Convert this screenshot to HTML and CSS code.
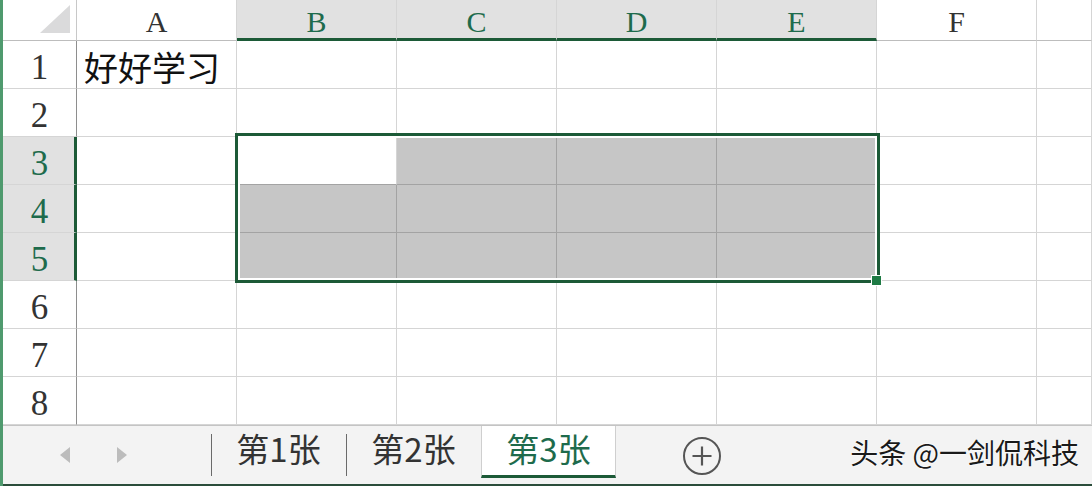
FILE: index.html
```html
<!DOCTYPE html>
<html lang="zh-CN">
<head>
<meta charset="utf-8">
<title>Sheet</title>
<link rel="stylesheet" href="styles.css">
</head>
<body>
<div class="app">
  <div class="sheet">
    <div class="grid">
      <div class="cell corner"><span class="tri"></span></div>
      <div class="cell colhead">A</div>
      <div class="cell colhead sel">B</div>
      <div class="cell colhead sel">C</div>
      <div class="cell colhead sel">D</div>
      <div class="cell colhead sel">E</div>
      <div class="cell colhead">F</div>
      <div class="cell colhead"></div>

      <div class="cell rowhead">1</div>
      <div class="cell text">好好学习</div>
      <div class="cell"></div><div class="cell"></div><div class="cell"></div><div class="cell"></div><div class="cell"></div><div class="cell"></div>

      <div class="cell rowhead">2</div>
      <div class="cell"></div><div class="cell"></div><div class="cell"></div><div class="cell"></div><div class="cell"></div><div class="cell"></div><div class="cell"></div>

      <div class="cell rowhead sel">3</div>
      <div class="cell"></div><div class="cell active"></div><div class="cell hl"></div><div class="cell hl"></div><div class="cell hl"></div><div class="cell"></div><div class="cell"></div>

      <div class="cell rowhead sel">4</div>
      <div class="cell"></div><div class="cell hl"></div><div class="cell hl"></div><div class="cell hl"></div><div class="cell hl"></div><div class="cell"></div><div class="cell"></div>

      <div class="cell rowhead sel">5</div>
      <div class="cell"></div><div class="cell hl"></div><div class="cell hl"></div><div class="cell hl"></div><div class="cell hl"></div><div class="cell"></div><div class="cell"></div>

      <div class="cell rowhead">6</div>
      <div class="cell"></div><div class="cell"></div><div class="cell"></div><div class="cell"></div><div class="cell"></div><div class="cell"></div><div class="cell"></div>

      <div class="cell rowhead">7</div>
      <div class="cell"></div><div class="cell"></div><div class="cell"></div><div class="cell"></div><div class="cell"></div><div class="cell"></div><div class="cell"></div>

      <div class="cell rowhead">8</div>
      <div class="cell"></div><div class="cell"></div><div class="cell"></div><div class="cell"></div><div class="cell"></div><div class="cell"></div><div class="cell"></div>
    </div>
    <div class="selection"></div>
    <div class="handle"></div>
  </div>

  <div class="tabbar">
    <div class="nav">
      <span class="arrow left"></span>
      <span class="arrow right"></span>
    </div>
    <div class="tab first">第1张</div>
    <div class="tab">第2张</div>
    <div class="tab current">第3张</div>
    <div class="add">
      <svg width="40" height="40" viewBox="0 0 40 40">
        <circle cx="20" cy="20" r="18" fill="none" stroke="#555" stroke-width="2"/>
        <path d="M20 10.5V29.5M10.5 20H29.5" stroke="#555" stroke-width="2.2"/>
      </svg>
    </div>
    <div class="mark">头条 @一剑侃科技</div>
  </div>
</div>
</body>
</html>
```

FILE: styles.css
```css
* { box-sizing: border-box; }
html, body { margin: 0; padding: 0; background: #fff; }
.app {
  width: 1092px;
  height: 486px;
  border-left: 3px solid #4f9a6e;
  display: flex;
  flex-direction: column;
  overflow: hidden;
}
.sheet { position: relative; height: 425px; flex: none; }
.grid {
  display: grid;
  grid-template-columns: 74px repeat(6, 160px) 1fr;
  grid-template-rows: 41px repeat(8, 48px);
}
.cell {
  border-right: 1px solid #d5d5d5;
  border-bottom: 1px solid #d5d5d5;
  background: #fff;
}
.corner { position: relative; border-right-color: #c8c8c8; border-bottom-color: #bdbdbd; }
.tri {
  position: absolute;
  right: 6px;
  bottom: 7px;
  width: 0;
  height: 0;
  border-left: 30px solid transparent;
  border-bottom: 28px solid #dadadb;
}
.colhead {
  font-family: "Liberation Serif", serif;
  font-size: 30px;
  color: #333;
  display: flex;
  align-items: center;
  justify-content: center;
  border-bottom-color: #bdbdbd;
  border-right-color: #d5d5d5;
  padding-top: 4px;
}
.colhead.sel {
  background: #e1e1e1;
  color: #1e6b4c;
  border-bottom: 3px solid #1c5a37;
  padding-top: 6px;
}
.rowhead {
  font-family: "Liberation Serif", serif;
  font-size: 35px;
  color: #333;
  display: flex;
  align-items: center;
  justify-content: center;
  border-right-color: #8e8e8e;
  border-bottom-color: #d5d5d5;
  padding-top: 6px;
}
.rowhead.sel {
  background: #e1e1e1;
  color: #1e6b4c;
  border-right: 3px solid #1c5a37;
  padding-left: 2px;
}
.text {
  font-family: "Noto Sans CJK SC", sans-serif;
  font-size: 34px;
  color: #111;
  padding-left: 7px;
  padding-top: 2px;
  line-height: 47px;
  white-space: nowrap;
  overflow: visible;
}
.hl {
  background: #c6c6c6;
  border-right-color: #a3a3a3;
  border-bottom-color: #a3a3a3;
}
.active { border-bottom-color: #a3a3a3; }
.selection {
  position: absolute;
  left: 232px;
  top: 133px;
  width: 645px;
  height: 150px;
  border: 3px solid #1c5a37;
  box-shadow: inset 0 0 0 2px #fff;
  pointer-events: none;
}
.handle {
  position: absolute;
  left: 868px;
  top: 275px;
  width: 11px;
  height: 11px;
  background: #1e7a44;
  border: 1px solid #fff;
}
.tabbar {
  flex: 1;
  display: flex;
  align-items: flex-start;
  background: #f3f3f3;
  border-top: 1px solid #c4c4c4;
  border-bottom: 2px solid #2b4d3b;
  font-family: "Noto Sans CJK SC", sans-serif;
}
.nav {
  width: 208px;
  height: 58px;
  display: flex;
  align-items: center;
  padding-left: 57px;
  gap: 47px;
}
.arrow { width: 0; height: 0; border-top: 8px solid transparent; border-bottom: 8px solid transparent; }
.arrow.left { border-right: 10px solid #bcbcbc; }
.arrow.right { border-left: 10px solid #bcbcbc; }
.tab {
  width: 135px;
  height: 52px;
  display: flex;
  align-items: center;
  justify-content: center;
  font-size: 33px;
  color: #333;
  position: relative;
  padding-bottom: 9px;
}
.tab::before {
  content: "";
  position: absolute;
  left: 0;
  top: 8px;
  bottom: 2px;
  border-left: 1px solid #6a6a6a;
}
.tab.current {
  width: 135px;
  background: #fff;
  color: #1e6b4c;
  border-left: 1px solid #cfcfcf;
  border-right: 1px solid #cfcfcf;
  border-bottom: 3px solid #1c5a37;
  padding-bottom: 6px;
}
.tab.current::before { display: none; }
.add {
  margin-left: 66px;
  margin-top: 10px;
  width: 40px;
  height: 40px;
}
.add svg { display: block; }
.mark {
  margin-left: auto;
  margin-right: 13px;
  margin-top: 6px;
  font-size: 28px;
  color: #1a1a1a;
  white-space: nowrap;
  text-shadow: 0 0 2px #fff, 0 0 2px #fff;
}
```
